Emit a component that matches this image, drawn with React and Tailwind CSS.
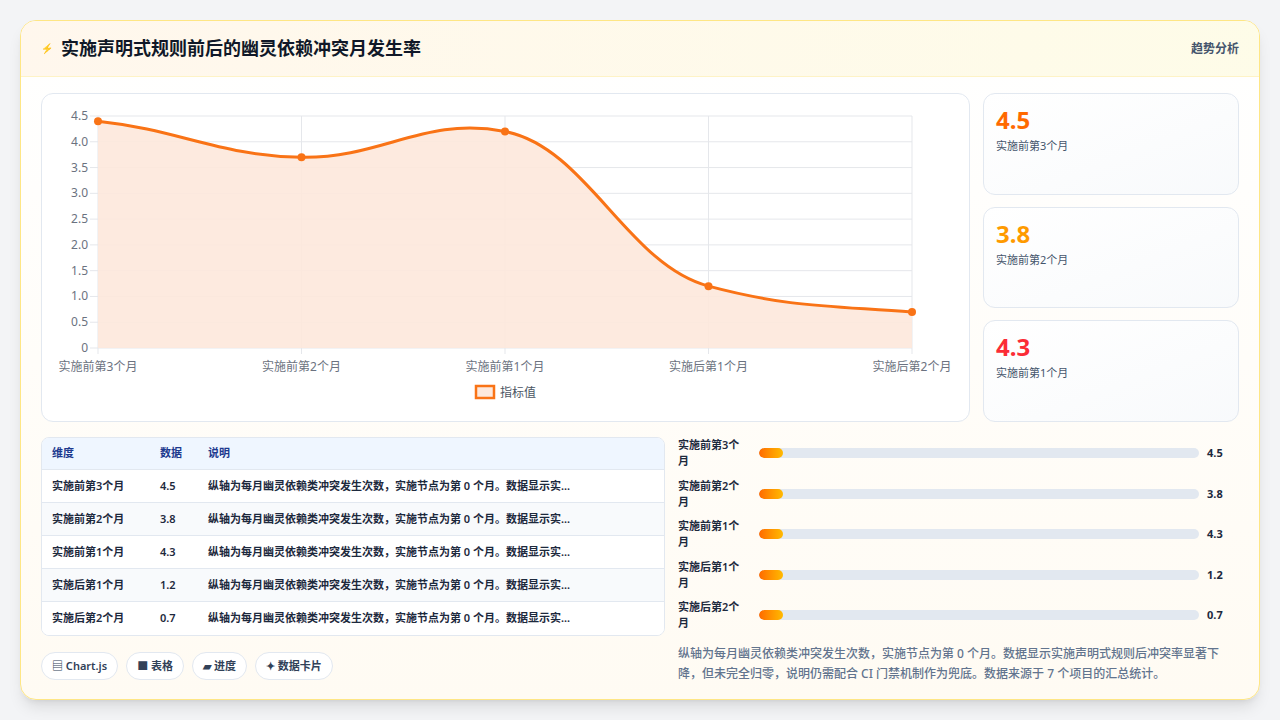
import React from 'react';

const rows = [
  { name: '实施前第3个月', v: 4.5, p: 4.4 },
  { name: '实施前第2个月', v: 3.8, p: 3.7 },
  { name: '实施前第1个月', v: 4.3, p: 4.2 },
  { name: '实施后第1个月', v: 1.2, p: 1.2 },
  { name: '实施后第2个月', v: 0.7, p: 0.7 },
];
const desc = '纵轴为每月幽灵依赖类冲突发生次数，实施节点为第 0 个月。数据显示实...';

function Chart() {
  const x0 = 56, x1 = 870, top = 22, bot = 254;
  const ys = (v) => bot - (v / 4.5) * (bot - top);
  const xs = rows.map((_, i) => x0 + (i * (x1 - x0)) / 4);
  const pts = rows.map((r, i) => [xs[i], ys(r.p)]);
  let d = `M${pts[0][0]},${pts[0][1]}`;
  for (let i = 0; i < pts.length - 1; i++) {
    const [ax, ay] = pts[i], [bx, by] = pts[i + 1];
    const dx = (bx - ax) * 0.4;
    const pm = pts[i - 1] || pts[i], pn = pts[i + 2] || pts[i + 1];
    const s1 = ((by - pm[1]) / (bx - pm[0])) * dx * 0.6;
    const s2 = ((pn[1] - ay) / (pn[0] - ax)) * dx * 0.6;
    d += ` C${ax + dx},${ay + s1} ${bx - dx},${by - s2} ${bx},${by}`;
  }
  const ticks = ['4.5', '4.0', '3.5', '3.0', '2.5', '2.0', '1.5', '1.0', '0.5', '0'];
  return (
    <svg width="928" height="328" className="block">
      {ticks.map((t, i) => {
        const y = top + (i * (bot - top)) / 9;
        return (
          <g key={t}>
            <line x1={x0 - 8} x2={x1} y1={y} y2={y} stroke="#e5e7eb" />
            <text x={x0 - 10} y={y + 4} textAnchor="end" fontSize="12" fill="#6b7280">{t}</text>
          </g>
        );
      })}
      {xs.map((x, i) => (
        <g key={i}>
          <line x1={x} x2={x} y1={top} y2={bot + 6} stroke="#e5e7eb" />
          <text x={x} y={bot + 23} textAnchor="middle" fontSize="12" fill="#6b7280">{rows[i].name}</text>
        </g>
      ))}
      <path d={`${d} L${x1},${bot} L${x0},${bot} Z`} fill="#fde8dc" fillOpacity="0.9" />
      <path d={d} fill="none" stroke="#f97316" strokeWidth="3" />
      {pts.map(([x, y], i) => <circle key={i} cx={x} cy={y} r="4" fill="#f97316" />)}
      <rect x="434" y="292" width="18" height="12" fill="#fde8dc" stroke="#f97316" strokeWidth="2.5" />
      <text x="458" y="303" fontSize="12" fill="#4b5563">指标值</text>
    </svg>
  );
}

export default function App() {
  const stats = [
    { v: '4.5', c: 'text-orange-500', l: '实施前第3个月' },
    { v: '3.8', c: 'text-amber-500', l: '实施前第2个月' },
    { v: '4.3', c: 'text-red-500', l: '实施前第1个月' },
  ];
  return (
    <div className="w-[1280px] h-[720px] bg-gray-100 p-5" style={{ fontFamily: '"Noto Sans", "Noto Sans CJK SC", sans-serif' }}>
      <div className="h-[680px] rounded-2xl border border-amber-200 overflow-hidden bg-gradient-to-b from-white to-[#fffbf3] shadow-lg flex flex-col">
        <div className="h-[56px] shrink-0 flex items-center justify-between px-5 bg-gradient-to-r from-orange-50 to-yellow-50 border-b border-amber-100">
          <div className="flex items-center gap-2">
            <span className="text-indigo-500 text-[10px]">⚡</span>
            <span className="text-[18px] font-bold text-gray-900">实施声明式规则前后的幽灵依赖冲突月发生率</span>
          </div>
          <span className="text-[12px] font-semibold text-slate-600">趋势分析</span>
        </div>
        <div className="flex-1 px-5 pt-4 flex flex-col">
          <div className="flex gap-[13px] h-[329px]">
            <div className="w-[929px] rounded-xl border border-slate-200 bg-white overflow-hidden"><Chart /></div>
            <div className="flex-1 flex flex-col gap-[12px]">
              {stats.map((s) => (
                <div key={s.v} className="flex-1 rounded-xl border border-slate-200 bg-gradient-to-br from-white to-slate-50 px-3 pt-3">
                  <div className={`text-[24px] font-bold leading-7 ${s.c}`}>{s.v}</div>
                  <div className="text-[11px] text-slate-600 mt-1">{s.l}</div>
                </div>
              ))}
            </div>
          </div>
          <div className="flex gap-[13px] mt-[15px]">
            <div className="w-[624px]">
              <div className="rounded-lg border border-slate-200 overflow-hidden bg-white text-[11px] font-semibold">
                <div className="flex h-[32px] items-center bg-blue-50 text-blue-900 border-b border-slate-200">
                  <div className="w-[118px] pl-2.5">维度</div><div className="w-[48px]">数据</div><div>说明</div>
                </div>
                {rows.map((r, i) => (
                  <div key={r.name} className={`flex h-[33px] items-center text-slate-800 ${i < 4 ? 'border-b border-slate-200' : ''} ${i % 2 ? 'bg-slate-50' : 'bg-white'}`}>
                    <div className="w-[118px] pl-2.5">{r.name}</div><div className="w-[48px]">{r.v}</div><div>{desc}</div>
                  </div>
                ))}
              </div>
              <div className="flex gap-2 mt-4 text-[11px] font-semibold text-slate-700">
                {['▤ Chart.js', '■ 表格', '▰ 进度', '✦ 数据卡片'].map((t) => (
                  <span key={t} className="h-[28px] px-2.5 flex items-center rounded-full border border-slate-200 bg-white">{t}</span>
                ))}
              </div>
            </div>
            <div className="flex-1 flex flex-col -mt-1 pr-1">
              {rows.map((r) => (
                <div key={r.name} className="flex items-center h-[40.5px]">
                  <div className="w-[81px] text-[11px] font-semibold text-slate-800 leading-[16px]">{r.name.slice(0, 6)}<br />月</div>
                  <div className="w-[440px] h-[10px] rounded-full bg-slate-200 overflow-hidden">
                    <div className="h-full w-[24px] rounded-full bg-gradient-to-r from-orange-500 to-amber-400" />
                  </div>
                  <div className="ml-2 text-[11px] font-bold text-slate-800">{r.v}</div>
                </div>
              ))}
              <p className="mt-2 text-[12px] leading-[20px] text-slate-500 font-medium pr-2">纵轴为每月幽灵依赖类冲突发生次数，实施节点为第 0 个月。数据显示实施声明式规则后冲突率显著下降，但未完全归零，说明仍需配合 CI 门禁机制作为兜底。数据来源于 7 个项目的汇总统计。</p>
            </div>
          </div>
        </div>
      </div>
    </div>
  );
}
